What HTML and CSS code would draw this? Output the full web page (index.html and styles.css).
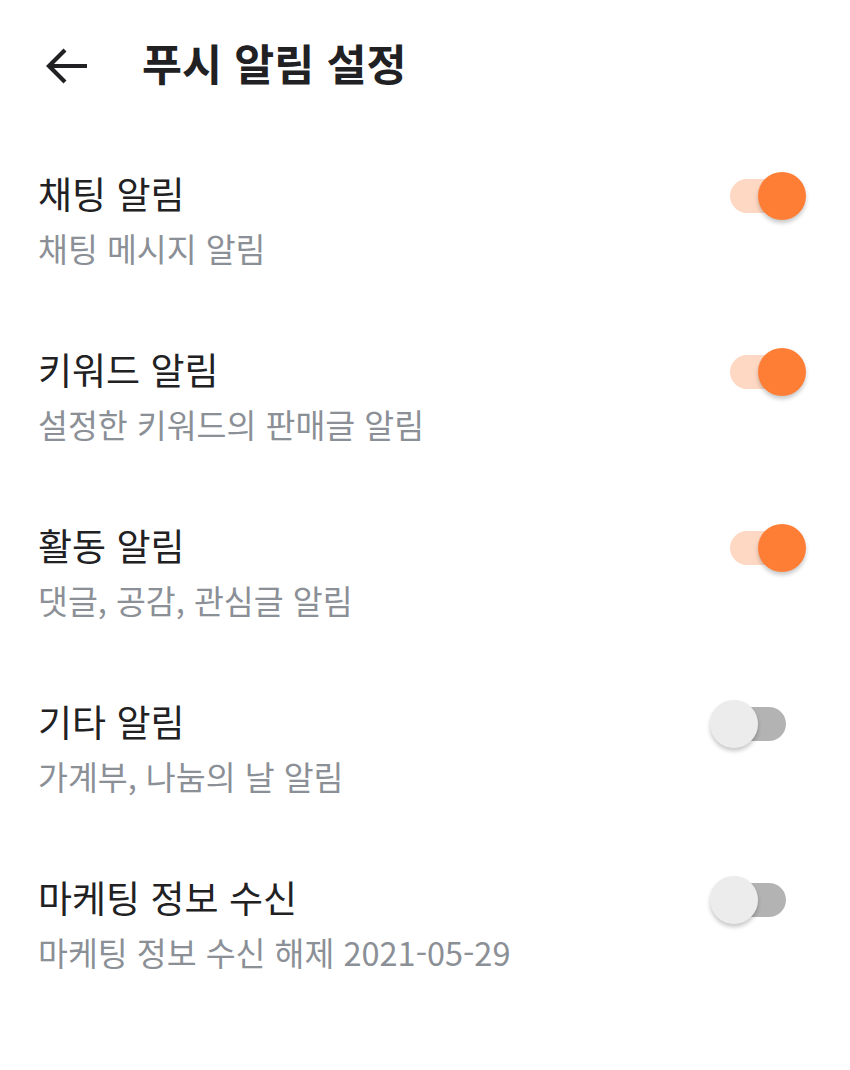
FILE: index.html
```html
<!DOCTYPE html>
<html lang="ko">

<head>
  <meta charset="utf-8" />
  <meta name="viewport" content="width=device-width, initial-scale=1" />
  <title>푸시 알림 설정</title>
  <link rel="stylesheet" href="styles.css">
</head>

<body>
  <div class="header">
    <svg class="back" width="44" height="38" viewBox="0 0 44 38">
      <path d="M42 19H4M20 3L4 19l16 16" fill="none" stroke="#212124" stroke-width="4.2" />
    </svg>
    <h1 class="title">푸시 알림 설정</h1>
  </div>

  <div class="list">
    <div class="row">
      <div class="texts">
        <div class="name">채팅 알림</div>
        <div class="desc">채팅 메시지 알림</div>
      </div>
      <div class="toggle on"><div class="track"></div><div class="thumb"></div></div>
    </div>
    <div class="row">
      <div class="texts">
        <div class="name">키워드 알림</div>
        <div class="desc">설정한 키워드의 판매글 알림</div>
      </div>
      <div class="toggle on"><div class="track"></div><div class="thumb"></div></div>
    </div>
    <div class="row">
      <div class="texts">
        <div class="name">활동 알림</div>
        <div class="desc">댓글, 공감, 관심글 알림</div>
      </div>
      <div class="toggle on"><div class="track"></div><div class="thumb"></div></div>
    </div>
    <div class="row">
      <div class="texts">
        <div class="name">기타 알림</div>
        <div class="desc">가계부, 나눔의 날 알림</div>
      </div>
      <div class="toggle"><div class="track"></div><div class="thumb"></div></div>
    </div>
    <div class="row">
      <div class="texts">
        <div class="name">마케팅 정보 수신</div>
        <div class="desc">마케팅 정보 수신 해제 2021-05-29</div>
      </div>
      <div class="toggle"><div class="track"></div><div class="thumb"></div></div>
    </div>
  </div>
</body>

</html>
```

FILE: styles.css
```css
html,
body {
  margin: 0;
  background-color: #ffffff;
  color: #212124;
  font-family: "Noto Sans CJK KR", "Noto Sans", sans-serif;
}

.header {
  display: flex;
  align-items: center;
  height: 132px;
  padding-left: 45px;
}

.back {
  display: block;
  margin-right: 53px;
}

.title {
  margin: -6px 0 0;
  font-size: 43.5px;
  font-weight: 700;
  line-height: 52px;
}

.list {
  display: flex;
  flex-direction: column;
}

.row {
  display: flex;
  justify-content: space-between;
  align-items: flex-start;
  padding: 37px 64px 38px 38px;
}

.name {
  font-size: 37px;
  line-height: 48px;
}

.desc {
  margin-top: 9px;
  font-size: 32.5px;
  line-height: 44px;
  color: #8b8f96;
}

.toggle {
  position: relative;
  width: 56px;
  height: 48px;
  margin-top: 3px;
}

.toggle .track {
  position: absolute;
  top: 7px;
  left: 0;
  width: 56px;
  height: 34px;
  border-radius: 17px;
  background-color: #b3b3b3;
}

.toggle .thumb {
  position: absolute;
  top: 0;
  left: -20px;
  width: 48px;
  height: 48px;
  border-radius: 50%;
  background-color: #ececec;
  box-shadow: 0 3px 4px rgba(0, 0, 0, 0.22);
}

.toggle.on .track {
  background-color: #fed8c3;
}

.toggle.on .thumb {
  left: 28px;
  background-color: #ff7e36;
}
```
